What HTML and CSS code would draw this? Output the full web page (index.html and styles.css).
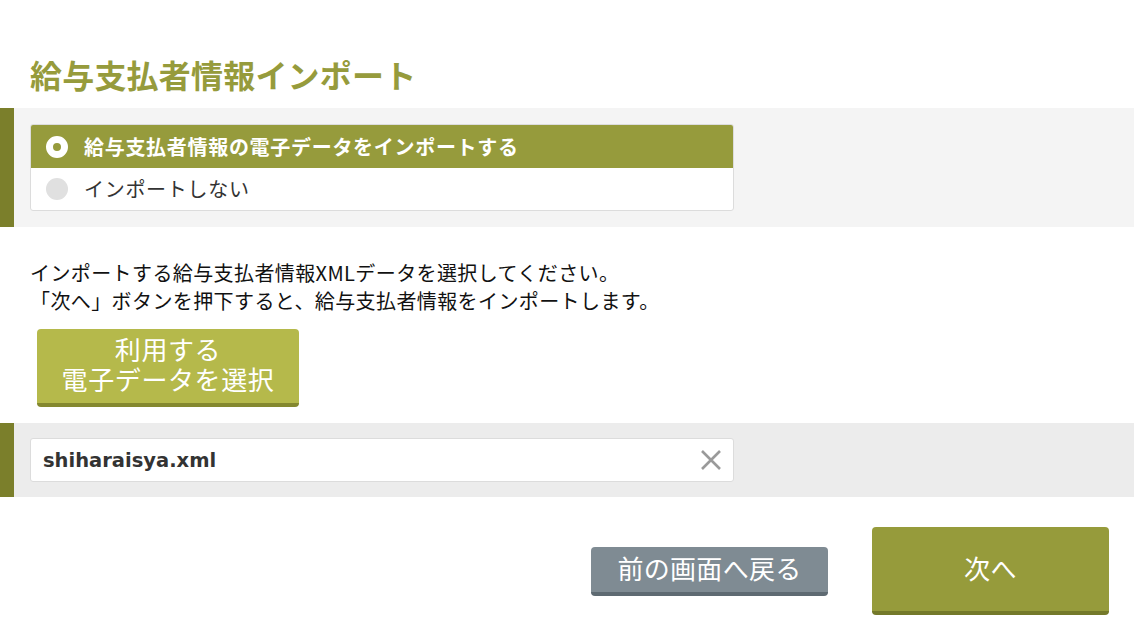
FILE: index.html
```html
<!DOCTYPE html>
<html lang="ja">
<head>
<meta charset="utf-8">
<title>給与支払者情報インポート</title>
<link rel="stylesheet" href="styles.css">
</head>
<body>
<h1 class="title">給与支払者情報インポート</h1>

<section class="band band-light">
  <div class="radio-box">
    <div class="radio-row radio-row-selected">
      <span class="radio radio-on"></span>
      <span class="radio-label">給与支払者情報の電子データをインポートする</span>
    </div>
    <div class="radio-row">
      <span class="radio radio-off"></span>
      <span class="radio-label">インポートしない</span>
    </div>
  </div>
</section>

<p class="desc">インポートする給与支払者情報XMLデータを選択してください。<br>「次へ」ボタンを押下すると、給与支払者情報をインポートします。</p>

<button class="btn btn-select"><span class="btn-line">利用する</span><span class="btn-line">電子データを選択</span></button>

<section class="band band-gray">
  <div class="file-field">
    <span class="file-name">shiharaisya.xml</span>
    <svg class="clear-icon" width="22" height="22" viewBox="0 0 22 22" aria-hidden="true">
      <path d="M2 2 L20 20 M20 2 L2 20" stroke="#9a9a9a" stroke-width="2.6" fill="none"/>
    </svg>
  </div>
</section>

<div class="actions">
  <button class="btn btn-back">前の画面へ戻る</button>
  <button class="btn btn-next">次へ</button>
</div>
</body>
</html>
```

FILE: styles.css
```css
* { box-sizing: border-box; }

body {
  margin: 0;
  background: #fff;
  font-family: "Noto Sans CJK JP", "DejaVu Sans", sans-serif;
  color: #222;
}

.title {
  margin: 0;
  padding: 52px 0 0 30px;
  height: 108px;
  font-size: 32px;
  line-height: 44px;
  letter-spacing: 0.2px;
  font-weight: bold;
  color: #969b3c;
}

.band {
  border-left: 14px solid #7b7f2b;
  padding: 16px 0 16px 16px;
}
.band-light { background: #f4f4f4; }
.band-gray { background: #ececec; padding: 15px 0 15px 16px; margin-top: 16px; }

.radio-box {
  width: 704px;
  background: #fff;
  border: 1px solid #dcdcdc;
  border-radius: 3px;
  overflow: hidden;
}

.radio-row {
  display: flex;
  align-items: center;
  height: 42px;
  padding-left: 15px;
  gap: 16px;
}
.radio-row-selected {
  height: 43px;
  background: #969b3c;
  color: #fff;
  font-weight: bold;
}

.radio {
  width: 22px;
  height: 22px;
  border-radius: 50%;
  flex: none;
}
.radio-on {
  background: #969b3c;
  border: 7px solid #fff;
}
.radio-off { background: #e0e0e0; }

.radio-label {
  font-size: 20px;
  letter-spacing: 0.7px;
  line-height: 26px;
}
.radio-row:not(.radio-row-selected) .radio-label { color: #333; }

.desc {
  margin: 32px 0 0 30px;
  font-size: 20px;
  letter-spacing: 0.4px;
  line-height: 28px;
  color: #111;
}

.btn {
  border: 0;
  font-family: inherit;
  color: #fff;
  cursor: pointer;
  border-radius: 4px;
  display: block;
}

.btn-select {
  margin: 14px 0 0 37px;
  width: 262px;
  height: 78px;
  padding: 0 0 4px;
  background: #b5b94b;
  border-bottom: 4px solid #84882f;
  font-size: 26px;
  letter-spacing: 0.6px;
  line-height: 30px;
  display: flex;
  flex-direction: column;
  align-items: center;
  justify-content: center;
}
.btn-line { display: block; height: 30px; }

.file-field {
  width: 704px;
  height: 44px;
  background: #fff;
  border: 1px solid #dcdcdc;
  border-radius: 3px;
  display: flex;
  align-items: center;
  justify-content: space-between;
  padding: 0 11px 0 12px;
}
.file-name {
  font-family: "DejaVu Sans", "Noto Sans CJK JP", sans-serif;
  font-weight: bold;
  font-size: 19.5px;
  color: #333;
}
.clear-icon { display: block; }

.actions {
  display: flex;
  justify-content: flex-end;
  align-items: center;
  gap: 44px;
  padding: 30px 25px 0 0;
}

.btn-back {
  width: 237px;
  height: 49px;
  padding: 0 0 2px;
  background: #7f8b93;
  border-bottom: 4px solid #5e6a72;
  font-size: 26px;
  letter-spacing: 0.3px;
  line-height: 30px;
}

.btn-next {
  width: 237px;
  height: 88px;
  padding: 0 0 4px;
  background: #969b3b;
  border-bottom: 4px solid #74792a;
  font-size: 26px;
  letter-spacing: 0.5px;
}
```
